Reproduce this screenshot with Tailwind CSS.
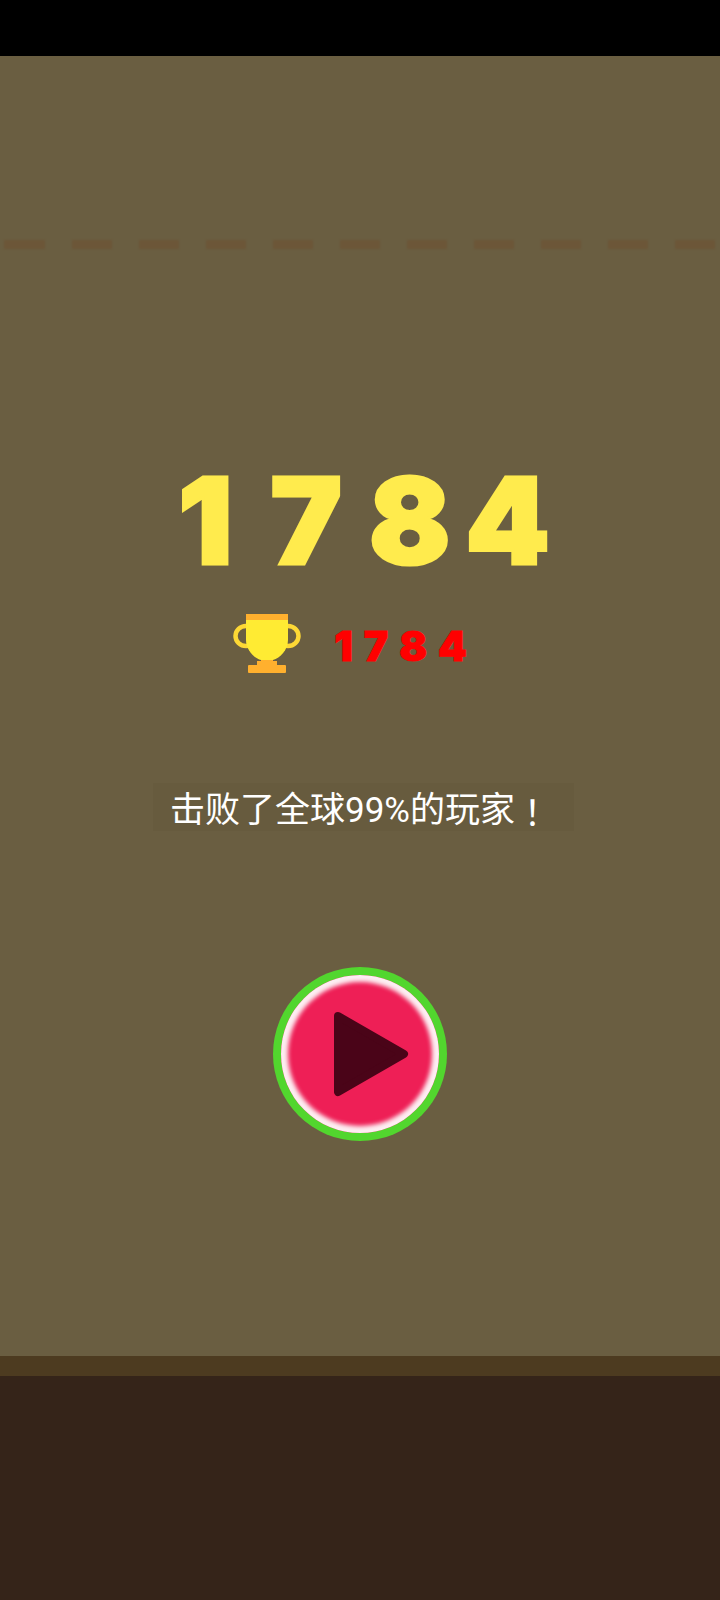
<!DOCTYPE html>
<html lang="zh-CN">
<head>
  <meta charset="UTF-8" />
  <meta name="viewport" content="width=device-width, initial-scale=1.0"/>
  <title>Game Over</title>
  <script src="https://cdn.jsdelivr.net/npm/@tailwindcss/browser@4"></script>
</head>
<body class="bg-black">
  <div class="flex flex-col w-[720px] h-[1600px] overflow-hidden">

    <!-- Status bar -->
    <div class="h-[56px] bg-black shrink-0"></div>

    <!-- Play area -->
    <div class="flex flex-col items-center h-[1300px] bg-[#6a5e41] shrink-0">

      <!-- Dashed limit line -->
      <div class="flex gap-[27px] w-full h-[9px] mt-[184px] pl-[4px] overflow-hidden blur-[1px]">
        <div class="w-[41px] shrink-0 bg-[#6c5638]"></div>
        <div class="w-[40px] shrink-0 bg-[#6c5638]"></div>
        <div class="w-[40px] shrink-0 bg-[#6c5638]"></div>
        <div class="w-[40px] shrink-0 bg-[#6c5638]"></div>
        <div class="w-[40px] shrink-0 bg-[#6c5638]"></div>
        <div class="w-[40px] shrink-0 bg-[#6c5638]"></div>
        <div class="w-[40px] shrink-0 bg-[#6c5638]"></div>
        <div class="w-[40px] shrink-0 bg-[#6c5638]"></div>
        <div class="w-[40px] shrink-0 bg-[#6c5638]"></div>
        <div class="w-[40px] shrink-0 bg-[#6c5638]"></div>
        <div class="w-[40px] shrink-0 bg-[#6c5638]"></div>
      </div>

      <!-- Score -->
      <div class="flex justify-center mt-[224px] ml-[8px] h-[95px] items-center font-['Inter'] font-black text-[120px] leading-none text-[#ffeb4d] [-webkit-text-stroke:3px_#ffeb4d]">
        <span>1</span><span class="ml-[38px]">7</span><span class="ml-[27px]">8</span><span class="ml-[15px]">4</span>
      </div>

      <!-- Best score -->
      <div class="flex items-center gap-[33px] mt-[46px] mr-[20px] h-[59px]">
        <svg class="w-[68px] h-[59px]" viewBox="0 0 68 59">
          <ellipse cx="13" cy="22" rx="10.5" ry="10" fill="none" stroke="#fdd835" stroke-width="4.5"/>
          <ellipse cx="55" cy="22" rx="10.5" ry="10" fill="none" stroke="#fdd835" stroke-width="4.5"/>
          <path d="M13 6h42v20c0 10-8 18-15 20H28C21 44 13 36 13 26z" fill="#ffeb33"/>
          <rect x="13" y="0" width="42" height="6" fill="#ffb02e"/>
          <path d="M28 46h12v1h4v5H24v-5h4z" fill="#ffb02e"/>
          <rect x="15" y="51" width="38" height="8" rx="1" fill="#ffb02e"/>
        </svg>
        <div class="flex gap-[11px] mt-[6px] font-['Inter'] font-black text-[41px] leading-none text-[#ff0000] [-webkit-text-stroke:1px_#ff0000]">
          <span>1</span><span>7</span><span>8</span><span>4</span>
        </div>
      </div>

      <!-- Rank message -->
      <div class="flex items-center justify-center w-[421px] h-[48px] ml-[6px] pr-[6px] pt-[6px] mt-[110px] bg-[#675b3e] font-['Roboto','Noto_Sans_CJK_SC',sans-serif] text-[35px] leading-none text-white">
        击败了全球99%的玩家<span class="font-['Noto_Sans_CJK_TC',sans-serif]">！</span>
      </div>

      <!-- Replay button -->
      <div class="flex items-center justify-center w-[174px] h-[174px] mt-[136px] rounded-full bg-[#52d62e] p-[8px]">
        <div class="flex items-center justify-center w-full h-full rounded-full bg-[#ee1f56] shadow-[inset_0_0_4px_7px_#fdeef2]">
          <svg class="w-[76px] h-[86px] ml-[22px]" viewBox="0 0 76 86">
            <path d="M5 5l66 38-66 38z" fill="#4a0418" stroke="#4a0418" stroke-width="8" stroke-linejoin="round"/>
          </svg>
        </div>
      </div>
    </div>

    <!-- Ground -->
    <div class="h-[20px] bg-[#4d3b20] shrink-0"></div>
    <div class="flex-1 bg-[#352419]"></div>
  </div>
</body>
</html>
